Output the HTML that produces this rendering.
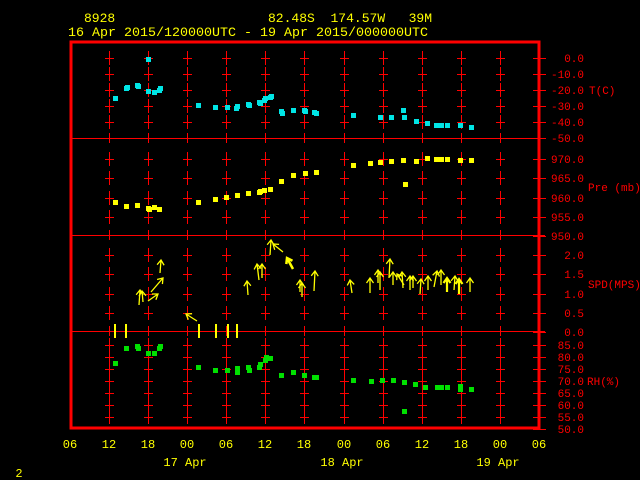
<!DOCTYPE html>
<html><head><style>
html,body{margin:0;padding:0;background:#000;width:640px;height:480px;overflow:hidden}
svg{display:block}
text{font-family:"Liberation Mono",monospace;white-space:pre}
</style></head><body>
<svg id="s" width="640" height="480" xmlns="http://www.w3.org/2000/svg" xml:space="preserve">
<g fill="#ffff00" font-size="13">
<text x="84" y="22">8928</text>
<text x="268" y="22" textLength="164" lengthAdjust="spacingAndGlyphs">82.48S  174.57W   39M</text>
<text x="68" y="36" textLength="360" lengthAdjust="spacingAndGlyphs">16 Apr 2015/120000UTC - 19 Apr 2015/000000UTC</text>
</g>
<g id="grid" stroke="#ff0000" stroke-width="1" shape-rendering="crispEdges"></g>
<rect x="71" y="42" width="468" height="386" fill="none" stroke="#ff0000" stroke-width="3" shape-rendering="crispEdges"/>
<g id="pts" shape-rendering="crispEdges"></g>
<g id="wind" stroke="#ffff00" stroke-width="1.3" fill="none"></g>
<g id="lbl" fill="#ff0000" font-size="11" text-anchor="end"></g>
<g fill="#ff0000" font-size="11">
<text x="589" y="94">T(C)</text>
<text x="588" y="191">Pre (mb)</text>
<text x="588" y="288">SPD(MPS)</text>
<text x="587" y="385">RH(%)</text>
</g>
<g id="xl" fill="#ffff00" font-size="12" text-anchor="middle"></g>
<g fill="#ffff00" font-size="12" text-anchor="middle">
<text x="185" y="466">17 Apr</text>
<text x="342" y="466">18 Apr</text>
<text x="498" y="466">19 Apr</text>
<text x="19" y="477">2</text>
</g>
</svg>
<script>
var NS="http://www.w3.org/2000/svg";
function el(p,t,a){var e=document.createElementNS(NS,t);for(var k in a)e.setAttribute(k,a[k]);document.getElementById(p).appendChild(e);return e;}
var cols=[];for(var i=1;i<12;i++)cols.push(Math.round(70+39.08*i));
[138,235,331].forEach(function(y){el("grid","line",{x1:71,x2:545,y1:y+.5,y2:y+.5});});
var panels=[[58,74,90,106,122],[159,178,198,217],[255,274,294,313],[345,357,369,381,393,405,417]];
panels.forEach(function(ys){ys.forEach(function(y){cols.forEach(function(x){
 el("grid","line",{x1:x+.5,x2:x+.5,y1:y-7,y2:y+7});
 el("grid","line",{x1:x-4,x2:x+5,y1:y+.5,y2:y+.5});});});});
cols.forEach(function(x){[138,235,331].forEach(function(y){el("grid","line",{x1:x+.5,x2:x+.5,y1:y-5,y2:y+5});});});
var L=[[58,"0.0"],[74,"-10.0"],[90,"-20.0"],[106,"-30.0"],[122,"-40.0"],[138,"-50.0"],[159,"970.0"],[178,"965.0"],[198,"960.0"],[217,"955.0"],[236,"950.0"],[255,"2.0"],[274,"1.5"],[294,"1.0"],[313,"0.5"],[332,"0.0"],[345,"85.0"],[357,"80.0"],[369,"75.0"],[381,"70.0"],[393,"65.0"],[405,"60.0"],[417,"55.0"],[429,"50.0"]];
L.forEach(function(l){el("grid","line",{x1:533,x2:546,y1:l[0]+.5,y2:l[0]+.5});
 var t=el("lbl","text",{x:584,y:l[0]+4});t.textContent=l[1];});
var xs=["06","12","18","00","06","12","18","00","06","12","18","00","06"];
xs.forEach(function(s,i){var t=el("xl","text",{x:Math.round(70+39.08*i),y:448});t.textContent=s;});
function sq(arr,c){arr.forEach(function(p){el("pts","rect",{x:p[0]-2,y:p[1]-2,width:5,height:5,fill:c});});}
sq([[148,59],[115,98],[126,88],[127,87],[137,85],[138,86],[148,91],[154,92],[159,90],[160,88],[198,105],[215,107],[227,107],[236,108],[237,106],[248,104],[249,105],[259,102],[260,103],[264,100],[265,98],[270,97],[271,96],[281,111],[282,113],[293,110],[304,110],[305,111],[314,112],[316,113],[353,115],[380,117],[391,117],[403,110],[404,117],[416,121],[427,123],[436,125],[441,125],[447,125],[460,125],[471,127]],"#00e5e5");
sq([[115,202],[126,206],[137,205],[148,208],[149,209],[154,207],[159,209],[198,202],[215,199],[226,197],[237,195],[248,193],[259,192],[260,191],[264,190],[270,189],[281,181],[293,175],[305,173],[316,172],[353,165],[370,163],[380,162],[391,161],[403,160],[405,184],[416,161],[427,158],[436,159],[441,159],[447,159],[460,160],[471,160]],"#ffff00");
sq([[115,363],[126,348],[137,346],[138,348],[148,353],[154,353],[159,348],[160,346],[198,367],[215,370],[227,370],[237,368],[237,372],[248,367],[249,370],[259,367],[260,364],[265,360],[266,357],[270,358],[281,375],[293,372],[304,375],[314,377],[316,377],[353,380],[371,381],[382,380],[393,380],[404,382],[404,411],[415,384],[425,387],[437,387],[441,387],[447,387],[460,389],[460,386],[471,389]],"#00e000");
[114,125,198,215,227,236].forEach(function(x){el("pts","rect",{x:x,y:324,width:2,height:14,fill:"#ffff00"});});
function ar(x1,y1,x2,y2,w){var dx=x2-x1,dy=y2-y1,l=Math.sqrt(dx*dx+dy*dy),ux=dx/l,uy=dy/l;
 var a=[x2-5*ux+3.5*uy,y2-5*uy-3.5*ux],b=[x2-5*ux-3.5*uy,y2-5*uy+3.5*ux];
 el("wind","path",{d:"M"+x1+" "+y1+"L"+x2+" "+y2+"M"+a[0]+" "+a[1]+"L"+x2+" "+y2+"L"+b[0]+" "+b[1],"stroke-width":w||1.3});}
[[139,305,140,290],[143,302,142,291],[148,301,158,294],[151,292,163,278],[160,273,161,260],[197,321,186,314],
[248,295,247,281],[259,280,257,264],[262,278,262,264],[270,255,271,240],[283,252,273,244],[293,269,287,258,2.5],
[302,297,302,283],[314,291,315,271],[300,292,300,280],
[352,293,350,280],[370,293,370,278],[378,283,378,270],[380,290,380,272],[389,278,390,259],[393,285,393,272],
[403,288,402,272],[410,290,410,276],[404,285,397,274],[413,288,413,276],[420,294,421,279],[428,290,428,276],
[434,287,437,271],[441,285,441,270],[447,292,447,278,2.2],[459,294,459,279,2.2],[470,292,470,278],[454,290,455,276]
].forEach(function(a){ar(a[0],a[1],a[2],a[3],a[4]);});
</script>
</body></html>
